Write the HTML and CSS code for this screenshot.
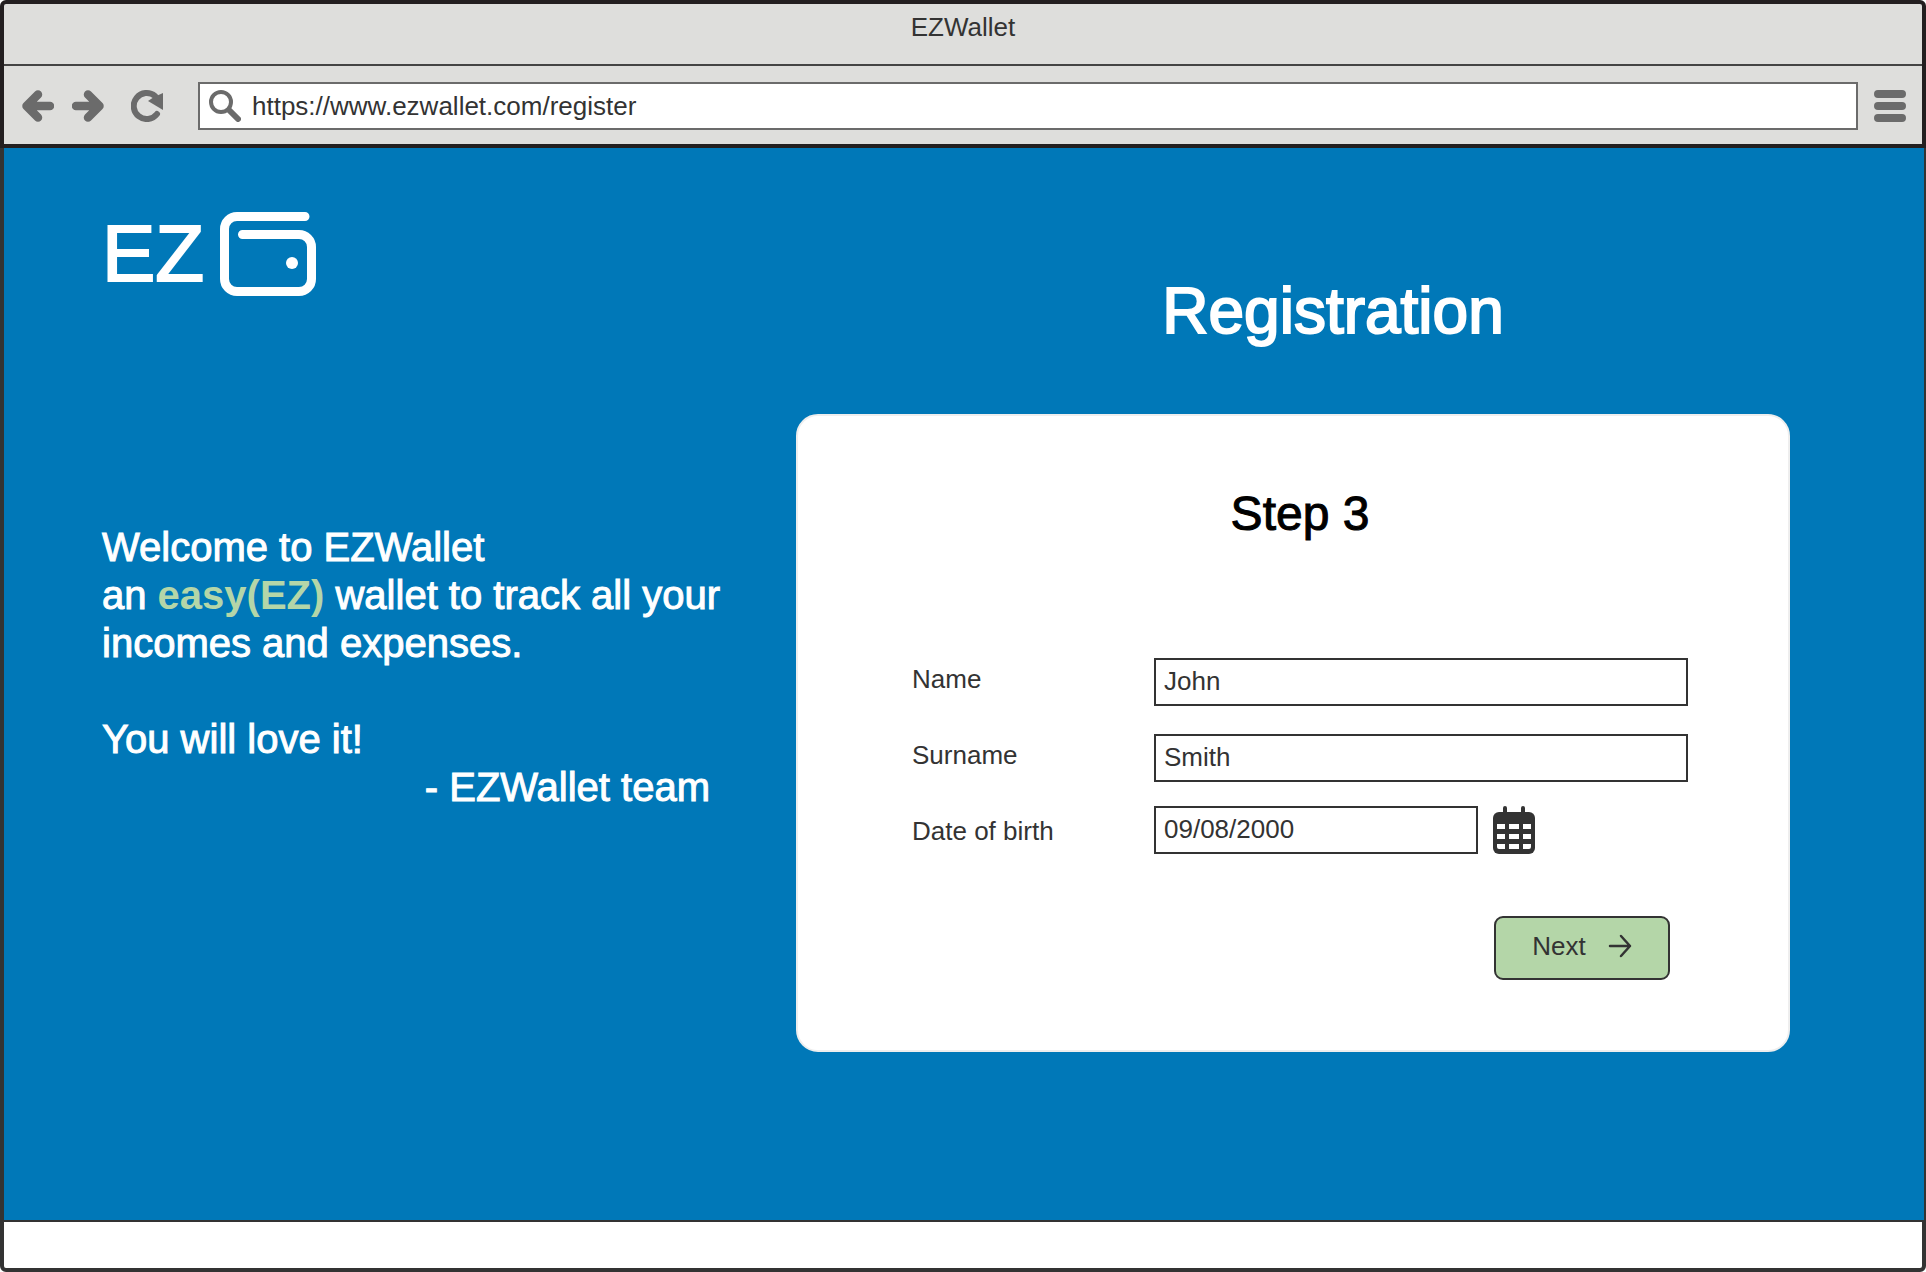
FILE: index.html
```html
<!DOCTYPE html>
<html lang="en">
<head>
<meta charset="utf-8">
<title>EZWallet</title>
<link rel="stylesheet" href="styles.css">
</head>
<body>
<div class="window">
  <header class="chrome">
    <div class="titlebar">EZWallet</div>
    <div class="toolbar">
      <button class="tool" type="button" aria-label="Back">
        <svg class="icon" viewBox="0 0 32 32"><path d="M16 4.500 4.500 16 16 27.500M6 16h22" fill="none" stroke="currentColor" stroke-width="8.500" stroke-linecap="round" stroke-linejoin="round"/></svg>
      </button>
      <button class="tool" type="button" aria-label="Forward">
        <svg class="icon" viewBox="0 0 32 32"><path d="M16 4.500 27.500 16 16 27.500M26 16H4" fill="none" stroke="currentColor" stroke-width="8.500" stroke-linecap="round" stroke-linejoin="round"/></svg>
      </button>
      <button class="tool reload" type="button" aria-label="Reload">
        <svg class="icon" viewBox="0 0 32 32"><path d="M26 24A13 13 0 1 1 24 6" fill="none" stroke="currentColor" stroke-width="6" stroke-linecap="round"/><path d="M32 3v17L17 11l6-4z" fill="currentColor"/></svg>
      </button>
      <label class="address">
        <svg class="icon" viewBox="0 0 32 32"><g fill="none" stroke="currentColor" stroke-linecap="round"><circle cx="12" cy="12" r="10" stroke-width="4"/><path d="M20 20l9 9" stroke-width="6"/></g></svg>
        <input class="address-input" type="text" value="https://www.ezwallet.com/register" aria-label="Address">
      </label>
      <button class="tool" type="button" aria-label="Menu">
        <svg class="icon" viewBox="0 0 32 32"><path d="M4 4h24M4 16h24M4 28h24" stroke="currentColor" stroke-width="8" stroke-linecap="round"/></svg>
      </button>
    </div>
  </header>
  <main class="page">
    <section class="intro">
      <div class="logo">
        <span>EZ</span>
        <svg class="wallet" viewBox="0 0 96 84"><g fill="none" stroke="currentColor" stroke-width="9" stroke-linecap="round"><path d="M85 4.500H17A12.500 12.500 0 0 0 4.500 17v50A12.500 12.500 0 0 0 17 79.500h62A12.500 12.500 0 0 0 91.500 67V35A12.500 12.500 0 0 0 79 22.500H22.500"/></g><circle cx="72" cy="51" r="6" fill="currentColor"/></svg>
      </div>
      <div class="pitch">
        <p>Welcome to EZWallet<br>an <strong>easy(EZ)</strong> wallet to track all your<br>incomes and expenses.</p>
        <p class="love">You will love it!</p>
        <p class="sign">- EZWallet team</p>
      </div>
    </section>
    <section class="register">
      <h1 class="heading">Registration</h1>
      <form class="card">
        <h2 class="step">Step 3</h2>
        <div class="field">
          <label for="name">Name</label>
          <input class="text" id="name" type="text" value="John">
        </div>
        <div class="field">
          <label for="surname">Surname</label>
          <input class="text" id="surname" type="text" value="Smith">
        </div>
        <div class="field date">
          <label for="birth">Date of birth</label>
          <div class="picker">
            <input class="text" id="birth" type="text" value="09/08/2000">
            <button class="calendar" type="button" aria-label="Pick a date">
              <svg viewBox="0 0 42 48"><path d="M12 2v8M30 2v8" stroke="currentColor" stroke-width="4" stroke-linecap="round"/><rect y="6" width="42" height="42" rx="6" fill="currentColor"/><path d="M4 18h8v5H4zM16 18h10v5H16zM30 18h8v5h-8zM4 28h8v5H4zM16 28h10v5H16zM30 28h8v5h-8zM4 38h8v5H6q-2 0-2-2zM16 38h10v5H16zM30 38h8v3q0 2-2 2h-6z" fill="#fff"/></svg>
            </button>
          </div>
        </div>
        <button class="next" type="submit">Next
          <svg viewBox="0 0 24 24"><path d="M2 12h20M13 2l9 10-9 10" fill="none" stroke="currentColor" stroke-width="2.500" stroke-linecap="round" stroke-linejoin="round"/></svg>
        </button>
      </form>
    </section>
  </main>
  <footer class="statusbar"></footer>
</div>
</body>
</html>
```
FILE: styles.css
```css
* { box-sizing: border-box; }

body {
  margin: 0;
  background: #fff;
  color: #333;
  font: 26px/30px "Liberation Sans", Arial, sans-serif;
}

h1, h2, p { margin: 0; font-weight: 400; }

button, input { font: inherit; color: inherit; margin: 0; }

button { padding: 0; border: 0; background: none; cursor: pointer; }

svg { display: block; flex: none; }

.window { display: flex; flex-direction: column; min-height: 100vh; }

/* Browser frame */
.chrome {
  background: #dededc;
  border: 4px solid #231f20;
  border-radius: 6px 6px 0 0;
}

.titlebar {
  height: 62px;
  padding-top: 8px;
  border-bottom: 2px solid #444;
  text-align: center;
}

.toolbar {
  display: flex;
  align-items: center;
  gap: 16px;
  height: 78px;
  padding: 2px 16px 0 18px;
  color: #6b6b6b;
}

.icon { width: 32px; height: 32px; }

.tool + .tool { margin-left: 2px; }

.tool.reload { margin: 0 19px 0 11px; }

.address {
  flex: 1;
  display: flex;
  align-items: center;
  gap: 11px;
  height: 48px;
  padding: 0 9px;
  background: #fff;
  border: 2px solid #6b6b6b;
}

.address-input {
  flex: 1;
  min-width: 0;
  padding: 0;
  border: 0;
  background: none;
  color: #333;
}

/* Page */
.page {
  flex: 1;
  display: grid;
  grid-template-columns: 646fr 994fr;
  gap: 48px;
  padding: 64px 134px 64px 98px;
  background: #0078b8;
  border: solid #333;
  border-width: 0 2px 0 4px;
  color: #fff;
}

.logo {
  display: flex;
  align-items: center;
  gap: 16px;
  font-size: 80px;
  line-height: 84px;
  -webkit-text-stroke: 2px currentColor;
}

.wallet { width: 96px; height: 84px; }

.pitch {
  margin-top: 227px;
  font-size: 40px;
  line-height: 48px;
  -webkit-text-stroke: 1px currentColor;
}

.pitch strong {
  color: #b4d6a8;
  -webkit-text-stroke: 0;
}

.love { margin-top: 48px; }

.sign { padding-right: 38px; text-align: right; }

.heading {
  margin-top: 63px;
  padding-left: 80px;
  font-size: 64px;
  line-height: 72px;
  text-align: center;
  -webkit-text-stroke: 2px currentColor;
}

.card {
  display: flex;
  flex-direction: column;
  margin-top: 67px;
  padding: 70px 100px 70px 114px;
  background: #fff;
  border: 2px solid #eee;
  border-radius: 22px;
  color: #333;
}

.step {
  margin-bottom: 116px;
  color: #000;
  font-size: 48px;
  line-height: 56px;
  text-align: center;
  -webkit-text-stroke: 1px currentColor;
}

.field {
  display: grid;
  grid-template-columns: 242px 1fr;
  align-items: center;
}

.field + .field { margin-top: 28px; }

.field + .date { margin-top: 24px; }

.field label { padding-bottom: 6px; }

.field.date label { padding: 2px 0 0; }

.text {
  width: 100%;
  height: 48px;
  padding: 0 8px 2px;
  background: #fff;
  border: 2px solid #333;
  border-radius: 0;
}

.picker { display: flex; gap: 15px; }

.picker .text { width: 324px; }

.calendar svg { width: 42px; height: 48px; }

.next {
  display: flex;
  align-self: flex-end;
  align-items: center;
  justify-content: center;
  gap: 22px;
  width: 176px;
  height: 64px;
  margin: 62px 18px 0 0;
  padding-bottom: 4px;
  background: #b4d6a8;
  border: 2px solid #333;
  border-radius: 9px;
}

.next svg { width: 24px; height: 24px; }

.statusbar {
  height: 52px;
  background: #fff;
  border: 4px solid #333;
  border-top-width: 2px;
  border-radius: 0 0 6px 6px;
}
```
